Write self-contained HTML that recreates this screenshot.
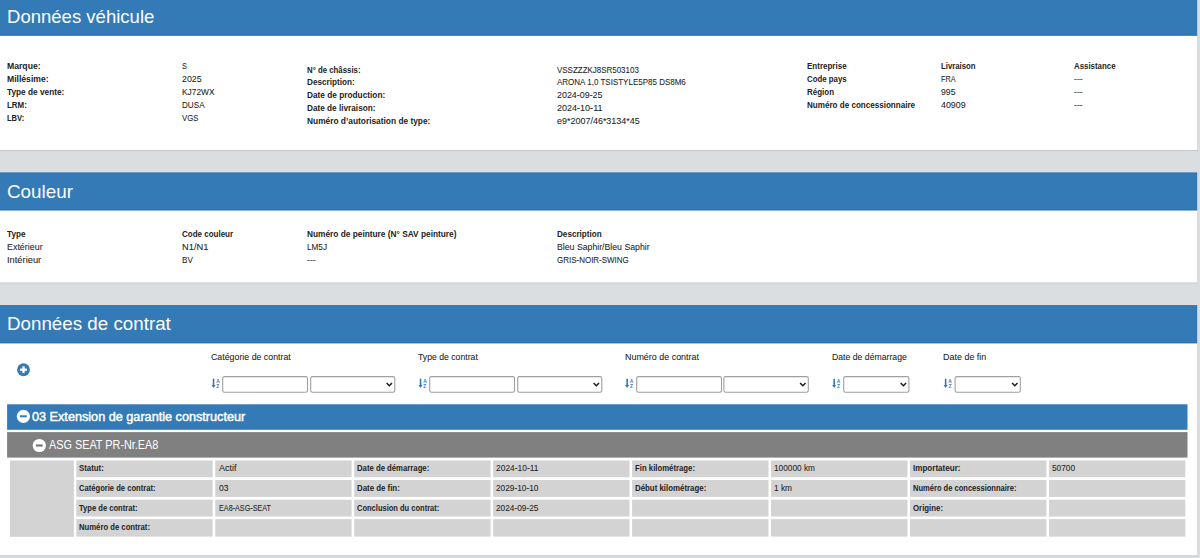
<!DOCTYPE html>
<html lang="fr"><head><meta charset="utf-8"><title>Données véhicule</title>
<style>
html,body{margin:0;padding:0}
body{width:1200px;height:558px;overflow:hidden;background:#dbdee1;position:relative;font-family:"Liberation Sans",sans-serif}
.t{position:absolute;margin:0;padding:0;display:block;white-space:nowrap;line-height:1;transform-origin:0 0;font-weight:400}
.t.b{font-weight:700}
.t.s{-webkit-text-stroke:0.06px currentColor}
.t.sb{-webkit-text-stroke:0.45px currentColor}
#bg{position:absolute;left:0;top:0}
</style></head><body>

<svg id="bg" width="1200" height="558" viewBox="0 0 1200 558"><rect x="0.00" y="149.90" width="1197.80" height="1.20" fill="#000" opacity="0.08"/>
<rect x="1197.20" y="0.00" width="0.90" height="149.90" fill="#000" opacity="0.05"/>
<rect x="0.00" y="-2.00" width="1197.20" height="151.90" fill="#fff"/>
<rect x="0.00" y="-2.00" width="1197.20" height="37.70" fill="#337ab7"/>
<rect x="0.00" y="-2.00" width="1197.20" height="0.90" fill="#1d66ad" opacity="0.55"/>
<rect x="0.00" y="34.80" width="1197.20" height="0.90" fill="#1d66ad" opacity="0.55"/>
<rect x="0.00" y="282.40" width="1197.80" height="1.20" fill="#000" opacity="0.08"/>
<rect x="1197.20" y="172.50" width="0.90" height="109.90" fill="#000" opacity="0.05"/>
<rect x="0.00" y="172.50" width="1197.20" height="109.90" fill="#fff"/>
<rect x="0.00" y="172.50" width="1197.20" height="37.90" fill="#337ab7"/>
<rect x="0.00" y="172.50" width="1197.20" height="0.90" fill="#1d66ad" opacity="0.55"/>
<rect x="0.00" y="209.50" width="1197.20" height="0.90" fill="#1d66ad" opacity="0.55"/>
<rect x="0.00" y="555.20" width="1197.80" height="1.20" fill="#000" opacity="0.08"/>
<rect x="1197.20" y="305.20" width="0.90" height="250.00" fill="#000" opacity="0.05"/>
<rect x="0.00" y="305.20" width="1197.20" height="250.00" fill="#fff"/>
<rect x="0.00" y="305.20" width="1197.20" height="38.10" fill="#337ab7"/>
<rect x="0.00" y="305.20" width="1197.20" height="0.90" fill="#1d66ad" opacity="0.55"/>
<rect x="0.00" y="342.40" width="1197.20" height="0.90" fill="#1d66ad" opacity="0.55"/>
<rect x="7.10" y="404.30" width="1180.40" height="25.50" fill="#337ab7"/>
<rect x="7.10" y="432.10" width="1180.40" height="25.50" fill="#808080"/>
<rect x="10.00" y="460.50" width="63.90" height="76.30" fill="#d3d3d3"/>
<rect x="76.30" y="460.50" width="136.40" height="16.70" fill="#d3d3d3"/>
<rect x="215.25" y="460.50" width="136.40" height="16.70" fill="#d3d3d3"/>
<rect x="354.20" y="460.50" width="136.40" height="16.70" fill="#d3d3d3"/>
<rect x="493.15" y="460.50" width="136.40" height="16.70" fill="#d3d3d3"/>
<rect x="632.10" y="460.50" width="136.40" height="16.70" fill="#d3d3d3"/>
<rect x="771.05" y="460.50" width="136.40" height="16.70" fill="#d3d3d3"/>
<rect x="910.00" y="460.50" width="136.40" height="16.70" fill="#d3d3d3"/>
<rect x="1048.95" y="460.50" width="136.40" height="16.70" fill="#d3d3d3"/>
<rect x="76.30" y="480.00" width="136.40" height="16.90" fill="#d3d3d3"/>
<rect x="215.25" y="480.00" width="136.40" height="16.90" fill="#d3d3d3"/>
<rect x="354.20" y="480.00" width="136.40" height="16.90" fill="#d3d3d3"/>
<rect x="493.15" y="480.00" width="136.40" height="16.90" fill="#d3d3d3"/>
<rect x="632.10" y="480.00" width="136.40" height="16.90" fill="#d3d3d3"/>
<rect x="771.05" y="480.00" width="136.40" height="16.90" fill="#d3d3d3"/>
<rect x="910.00" y="480.00" width="136.40" height="16.90" fill="#d3d3d3"/>
<rect x="1048.95" y="480.00" width="136.40" height="16.90" fill="#d3d3d3"/>
<rect x="76.30" y="499.70" width="136.40" height="16.80" fill="#d3d3d3"/>
<rect x="215.25" y="499.70" width="136.40" height="16.80" fill="#d3d3d3"/>
<rect x="354.20" y="499.70" width="136.40" height="16.80" fill="#d3d3d3"/>
<rect x="493.15" y="499.70" width="136.40" height="16.80" fill="#d3d3d3"/>
<rect x="632.10" y="499.70" width="136.40" height="16.80" fill="#d3d3d3"/>
<rect x="771.05" y="499.70" width="136.40" height="16.80" fill="#d3d3d3"/>
<rect x="910.00" y="499.70" width="136.40" height="16.80" fill="#d3d3d3"/>
<rect x="1048.95" y="499.70" width="136.40" height="16.80" fill="#d3d3d3"/>
<rect x="76.30" y="519.10" width="136.40" height="17.50" fill="#d3d3d3"/>
<rect x="215.25" y="519.10" width="136.40" height="17.50" fill="#d3d3d3"/>
<rect x="354.20" y="519.10" width="136.40" height="17.50" fill="#d3d3d3"/>
<rect x="493.15" y="519.10" width="136.40" height="17.50" fill="#d3d3d3"/>
<rect x="632.10" y="519.10" width="136.40" height="17.50" fill="#d3d3d3"/>
<rect x="771.05" y="519.10" width="136.40" height="17.50" fill="#d3d3d3"/>
<rect x="910.00" y="519.10" width="136.40" height="17.50" fill="#d3d3d3"/>
<rect x="1048.95" y="519.10" width="136.40" height="17.50" fill="#d3d3d3"/>
<rect x="222.70" y="376.6" width="84.80" height="15.7" rx="1.7" fill="#fff" stroke="#a0a0a0" stroke-width="1.1"/>
<rect x="429.70" y="376.6" width="84.80" height="15.7" rx="1.7" fill="#fff" stroke="#a0a0a0" stroke-width="1.1"/>
<rect x="636.70" y="376.6" width="84.80" height="15.7" rx="1.7" fill="#fff" stroke="#a0a0a0" stroke-width="1.1"/>
<rect x="310.70" y="376.6" width="84.10" height="15.7" rx="1.7" fill="#fff" stroke="#a0a0a0" stroke-width="1.1"/>
<path d="M386.60 383.00 L389.30 385.70 L392.00 383.00" fill="none" stroke="#1a1a1a" stroke-width="1.5"/>
<rect x="517.70" y="376.6" width="84.10" height="15.7" rx="1.7" fill="#fff" stroke="#a0a0a0" stroke-width="1.1"/>
<path d="M593.60 383.00 L596.30 385.70 L599.00 383.00" fill="none" stroke="#1a1a1a" stroke-width="1.5"/>
<rect x="723.90" y="376.6" width="84.40" height="15.7" rx="1.7" fill="#fff" stroke="#a0a0a0" stroke-width="1.1"/>
<path d="M800.10 383.00 L802.80 385.70 L805.50 383.00" fill="none" stroke="#1a1a1a" stroke-width="1.5"/>
<rect x="843.70" y="376.6" width="65.20" height="15.7" rx="1.7" fill="#fff" stroke="#a0a0a0" stroke-width="1.1"/>
<path d="M900.70 383.00 L903.40 385.70 L906.10 383.00" fill="none" stroke="#1a1a1a" stroke-width="1.5"/>
<rect x="955.10" y="376.6" width="65.20" height="15.7" rx="1.7" fill="#fff" stroke="#a0a0a0" stroke-width="1.1"/>
<path d="M1012.10 383.00 L1014.80 385.70 L1017.50 383.00" fill="none" stroke="#1a1a1a" stroke-width="1.5"/>
<g transform="translate(211.6,378.9)" fill="#337ab7"><rect x="1.15" y="-0.2" width="1.6" height="7.2"/><path d="M-0.1 6.2 H4.0 L1.95 9.2 Z"/><text x="4.6" y="3.7" font-family="Liberation Sans, sans-serif" font-weight="700" font-size="4.9">A</text><text x="4.7" y="9.0" font-family="Liberation Sans, sans-serif" font-weight="700" font-size="4.9">Z</text></g>
<g transform="translate(418.6,378.9)" fill="#337ab7"><rect x="1.15" y="-0.2" width="1.6" height="7.2"/><path d="M-0.1 6.2 H4.0 L1.95 9.2 Z"/><text x="4.6" y="3.7" font-family="Liberation Sans, sans-serif" font-weight="700" font-size="4.9">A</text><text x="4.7" y="9.0" font-family="Liberation Sans, sans-serif" font-weight="700" font-size="4.9">Z</text></g>
<g transform="translate(625.2,378.9)" fill="#337ab7"><rect x="1.15" y="-0.2" width="1.6" height="7.2"/><path d="M-0.1 6.2 H4.0 L1.95 9.2 Z"/><text x="4.6" y="3.7" font-family="Liberation Sans, sans-serif" font-weight="700" font-size="4.9">A</text><text x="4.7" y="9.0" font-family="Liberation Sans, sans-serif" font-weight="700" font-size="4.9">Z</text></g>
<g transform="translate(832.2,378.9)" fill="#337ab7"><rect x="1.15" y="-0.2" width="1.6" height="7.2"/><path d="M-0.1 6.2 H4.0 L1.95 9.2 Z"/><text x="4.6" y="3.7" font-family="Liberation Sans, sans-serif" font-weight="700" font-size="4.9">A</text><text x="4.7" y="9.0" font-family="Liberation Sans, sans-serif" font-weight="700" font-size="4.9">Z</text></g>
<g transform="translate(943.7,378.9)" fill="#337ab7"><rect x="1.15" y="-0.2" width="1.6" height="7.2"/><path d="M-0.1 6.2 H4.0 L1.95 9.2 Z"/><text x="4.6" y="3.7" font-family="Liberation Sans, sans-serif" font-weight="700" font-size="4.9">A</text><text x="4.7" y="9.0" font-family="Liberation Sans, sans-serif" font-weight="700" font-size="4.9">Z</text></g>
<circle cx="23.5" cy="369.7" r="6.45" fill="#337ab7"/>
<rect x="20.10" y="368.55" width="6.8" height="2.3" fill="#fff"/>
<rect x="22.35" y="366.30" width="2.3" height="6.8" fill="#fff"/>
<circle cx="23.4" cy="416.3" r="6.6" fill="#fff"/>
<rect x="20.00" y="415.30" width="6.8" height="2.0" fill="#337ab7"/>
<circle cx="39.3" cy="445.5" r="6.6" fill="#fff"/>
<rect x="35.90" y="444.50" width="6.8" height="2.0" fill="#6e6e6e"/></svg>
<section id="vehicule">
<h2 class="t" style="left:7.40px;top:7px;font-size:19px;color:#fff;transform:scaleX(0.9752)">Données véhicule</h2>
<b class="t b" style="left:6.90px;top:62px;font-size:9px;color:#222;transform:scaleX(0.9596)">Marque:</b>
<b class="t b" style="left:6.90px;top:75px;font-size:9px;color:#222;transform:scaleX(0.9560)">Millésime:</b>
<b class="t b" style="left:6.90px;top:88px;font-size:9px;color:#222;transform:scaleX(0.9189)">Type de vente:</b>
<b class="t b" style="left:6.90px;top:101px;font-size:9px;color:#222;transform:scaleX(0.8800)">LRM:</b>
<b class="t b" style="left:6.90px;top:114px;font-size:9px;color:#222;transform:scaleX(0.8384)">LBV:</b>
<span class="t s" style="left:181.80px;top:62px;font-size:9px;color:#222;transform:scaleX(0.8145)">S</span>
<span class="t s" style="left:181.80px;top:75px;font-size:9px;color:#222;transform:scaleX(0.9785)">2025</span>
<span class="t s" style="left:181.80px;top:88px;font-size:9px;color:#222;transform:scaleX(0.9310)">KJ72WX</span>
<span class="t s" style="left:181.80px;top:101px;font-size:9px;color:#222;transform:scaleX(0.9034)">DUSA</span>
<span class="t s" style="left:181.80px;top:114px;font-size:9px;color:#222;transform:scaleX(0.8624)">VGS</span>
<b class="t b" style="left:307.20px;top:66px;font-size:9px;color:#222;transform:scaleX(0.8682)">N° de châssis:</b>
<b class="t b" style="left:307.20px;top:78px;font-size:9px;color:#222;transform:scaleX(0.9083)">Description:</b>
<b class="t b" style="left:307.20px;top:91px;font-size:9px;color:#222;transform:scaleX(0.9200)">Date de production:</b>
<b class="t b" style="left:307.20px;top:104px;font-size:9px;color:#222;transform:scaleX(0.9130)">Date de livraison:</b>
<b class="t b" style="left:307.20px;top:117px;font-size:9px;color:#222;transform:scaleX(0.9277)">Numéro d’autorisation de type:</b>
<span class="t s" style="left:557.20px;top:66px;font-size:9px;color:#222;transform:scaleX(0.8839)">VSSZZZKJ8SR503103</span>
<span class="t s" style="left:557.20px;top:78px;font-size:9px;color:#222;transform:scaleX(0.8889)">ARONA 1,0 TSISTYLE5P85 DS8M6</span>
<span class="t s" style="left:557.20px;top:91px;font-size:9px;color:#222;transform:scaleX(0.9881)">2024-09-25</span>
<span class="t s" style="left:557.20px;top:104px;font-size:9px;color:#222;transform:scaleX(1.0028)">2024-10-11</span>
<span class="t s" style="left:557.20px;top:117px;font-size:9px;color:#222;transform:scaleX(0.9965)">e9*2007/46*3134*45</span>
<b class="t b" style="left:807.20px;top:62px;font-size:9px;color:#222;transform:scaleX(0.8893)">Entreprise</b>
<b class="t b" style="left:807.20px;top:75px;font-size:9px;color:#222;transform:scaleX(0.8700)">Code pays</b>
<b class="t b" style="left:807.20px;top:88px;font-size:9px;color:#222;transform:scaleX(0.8852)">Région</b>
<b class="t b" style="left:807.20px;top:101px;font-size:9px;color:#222;transform:scaleX(0.8967)">Numéro de concessionnaire</b>
<b class="t b" style="left:940.50px;top:62px;font-size:9px;color:#222;transform:scaleX(0.8647)">Livraison</b>
<span class="t s" style="left:940.50px;top:75px;font-size:9px;color:#222;transform:scaleX(0.8056)">FRA</span>
<span class="t s" style="left:940.50px;top:88px;font-size:9px;color:#222;transform:scaleX(0.9647)">995</span>
<span class="t s" style="left:940.50px;top:101px;font-size:9px;color:#222;transform:scaleX(0.9828)">40909</span>
<b class="t b" style="left:1073.50px;top:62px;font-size:9px;color:#222;transform:scaleX(0.8731)">Assistance</b>
<span class="t s" style="left:1073.50px;top:75px;font-size:9px;color:#555;transform:scaleX(0.9667)">---</span>
<span class="t s" style="left:1073.50px;top:88px;font-size:9px;color:#555;transform:scaleX(0.9667)">---</span>
<span class="t s" style="left:1073.50px;top:101px;font-size:9px;color:#555;transform:scaleX(0.9667)">---</span>
</section>
<section id="couleur">
<h2 class="t" style="left:7.00px;top:182px;font-size:19px;color:#fff;transform:scaleX(0.9918)">Couleur</h2>
<b class="t b" style="left:6.90px;top:230px;font-size:9px;color:#222;transform:scaleX(0.9094)">Type</b>
<span class="t s" style="left:6.90px;top:243px;font-size:9px;color:#222;transform:scaleX(0.9885)">Extérieur</span>
<span class="t s" style="left:6.90px;top:256px;font-size:9px;color:#222;transform:scaleX(1.0354)">Intérieur</span>
<b class="t b" style="left:181.80px;top:230px;font-size:9px;color:#222;transform:scaleX(0.8885)">Code couleur</b>
<span class="t s" style="left:181.80px;top:243px;font-size:9px;color:#222;transform:scaleX(1.0347)">N1/N1</span>
<span class="t s" style="left:181.80px;top:256px;font-size:9px;color:#222;transform:scaleX(0.9072)">BV</span>
<b class="t b" style="left:307.20px;top:230px;font-size:9px;color:#222;transform:scaleX(0.9231)">Numéro de peinture (N° SAV peinture)</b>
<span class="t s" style="left:307.20px;top:243px;font-size:9px;color:#222;transform:scaleX(0.9084)">LM5J</span>
<span class="t s" style="left:307.20px;top:256px;font-size:9px;color:#555;transform:scaleX(0.9667)">---</span>
<b class="t b" style="left:557.20px;top:230px;font-size:9px;color:#222;transform:scaleX(0.9027)">Description</b>
<span class="t s" style="left:557.20px;top:243px;font-size:9px;color:#222;transform:scaleX(0.9690)">Bleu Saphir/Bleu Saphir</span>
<span class="t s" style="left:557.20px;top:256px;font-size:9px;color:#222;transform:scaleX(0.8864)">GRIS-NOIR-SWING</span>
</section>
<section id="contrat">
<h2 class="t" style="left:7.40px;top:314px;font-size:19px;color:#fff;transform:scaleX(0.9877)">Données de contrat</h2>
<span class="t s" style="left:210.50px;top:353px;font-size:9px;color:#222;transform:scaleX(0.9784)">Catégorie de contrat</span>
<span class="t s" style="left:417.90px;top:353px;font-size:9px;color:#222;transform:scaleX(0.9638)">Type de contrat</span>
<span class="t s" style="left:624.50px;top:353px;font-size:9px;color:#222;transform:scaleX(0.9927)">Numéro de contrat</span>
<span class="t s" style="left:831.50px;top:353px;font-size:9px;color:#222;transform:scaleX(0.9646)">Date de démarrage</span>
<span class="t s" style="left:943.00px;top:353px;font-size:9px;color:#222;transform:scaleX(0.9947)">Date de fin</span>
<h3 class="t sb" style="left:32.40px;top:410px;font-size:13px;color:#fff;transform:scaleX(0.9737)">03 Extension de garantie constructeur</h3>
<h3 class="t" style="left:49.00px;top:438px;font-size:13px;color:#fff;transform:scaleX(0.8350)">ASG SEAT PR-Nr.EA8</h3>
<b class="t b" style="left:79.40px;top:464px;font-size:9px;color:#222;transform:scaleX(0.8702)">Statut:</b>
<span class="t s" style="left:218.63px;top:464px;font-size:9px;color:#222;transform:scaleX(0.9991)">Actif</span>
<b class="t b" style="left:357.26px;top:464px;font-size:9px;color:#222;transform:scaleX(0.8596)">Date de démarrage:</b>
<span class="t s" style="left:496.49px;top:464px;font-size:9px;color:#222;transform:scaleX(0.9366)">2024-10-11</span>
<b class="t b" style="left:635.12px;top:464px;font-size:9px;color:#222;transform:scaleX(0.8631)">Fin kilométrage:</b>
<span class="t s" style="left:774.35px;top:464px;font-size:9px;color:#222;transform:scaleX(0.9185)">100000 km</span>
<b class="t b" style="left:912.98px;top:464px;font-size:9px;color:#222;transform:scaleX(0.8960)">Importateur:</b>
<span class="t s" style="left:1052.21px;top:464px;font-size:9px;color:#222;transform:scaleX(0.9189)">50700</span>
<b class="t b" style="left:79.40px;top:484px;font-size:9px;color:#222;transform:scaleX(0.8452)">Catégorie de contrat:</b>
<span class="t s" style="left:218.63px;top:484px;font-size:9px;color:#222;transform:scaleX(0.9485)">03</span>
<b class="t b" style="left:357.26px;top:484px;font-size:9px;color:#222;transform:scaleX(0.8722)">Date de fin:</b>
<span class="t s" style="left:496.49px;top:484px;font-size:9px;color:#222;transform:scaleX(0.9230)">2029-10-10</span>
<b class="t b" style="left:635.12px;top:484px;font-size:9px;color:#222;transform:scaleX(0.8741)">Début kilométrage:</b>
<span class="t s" style="left:774.35px;top:484px;font-size:9px;color:#222;transform:scaleX(0.9223)">1 km</span>
<b class="t b" style="left:912.98px;top:484px;font-size:9px;color:#222;transform:scaleX(0.8377)">Numéro de concessionnaire:</b>
<b class="t b" style="left:79.40px;top:504px;font-size:9px;color:#222;transform:scaleX(0.8436)">Type de contrat:</b>
<span class="t s" style="left:218.63px;top:504px;font-size:9px;color:#222;transform:scaleX(0.8017)">EA8-ASG-SEAT</span>
<b class="t b" style="left:357.26px;top:504px;font-size:9px;color:#222;transform:scaleX(0.8350)">Conclusion du contrat:</b>
<span class="t s" style="left:496.49px;top:504px;font-size:9px;color:#222;transform:scaleX(0.9230)">2024-09-25</span>
<b class="t b" style="left:912.98px;top:504px;font-size:9px;color:#222;transform:scaleX(0.8692)">Origine:</b>
<b class="t b" style="left:79.40px;top:523px;font-size:9px;color:#222;transform:scaleX(0.8553)">Numéro de contrat:</b>
</section>
</body></html>
